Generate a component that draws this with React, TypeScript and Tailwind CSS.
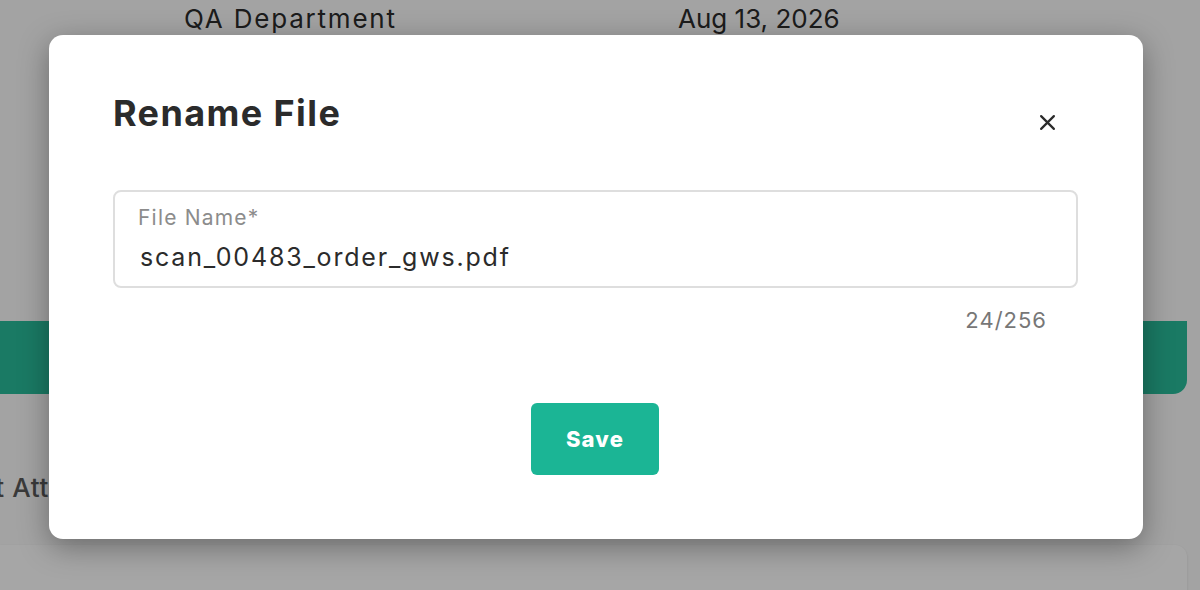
import React from "react";

export default function App() {
  return (
    <div
      className="relative w-[1200px] h-[590px] overflow-hidden bg-[#fbfbfb]"
      style={{ fontFamily: "Inter, 'Noto Sans', sans-serif" }}
    >
      {/* background page */}
      <div className="flex flex-col w-[1187px]">
        <div className="flex h-[37px] items-center text-[26px] text-[#2b2b2b]">
          <div className="w-[184px]" />
          <div className="w-[494px] tracking-[1.8px]">QA Department</div>
          <div>Aug 13, 2026</div>
        </div>
        <div className="h-[284px]" />
        <div className="h-[73px] bg-[#28bc9a] rounded-br-[14px]" />
        <div className="h-[80px]" />
        <div className="h-[26px] flex items-center text-[26px] font-medium text-[#5a5a5a] ml-[-128px] whitespace-nowrap tracking-[0.6px]">
          Document Attachments
        </div>
        <div className="h-[45px]" />
        <div className="h-[60px] bg-white rounded-tr-[12px] shadow-sm" />
      </div>

      {/* overlay */}
      <div className="absolute inset-0 bg-black/35 pt-[35px] pl-[49px]">
        <div className="w-[1094px] h-[504px] bg-white rounded-[14px] shadow-[0_8px_30px_rgba(0,0,0,0.35)] flex flex-col pl-[64px] pr-[65px] pt-[51px]">
          <div className="flex items-start justify-between">
            <h2 className="text-[36px] leading-[54px] font-bold text-[#2b2b2b] tracking-[1.4px]">
              Rename File
            </h2>
            <button className="mt-[26px] mr-[21px] w-[20px] h-[20px] flex items-center justify-center text-[#2b2b2b]">
              <svg width="17" height="17" viewBox="0 0 16 16" fill="none">
                <path d="M2 2L14 14M14 2L2 14" stroke="currentColor" strokeWidth="2.1" strokeLinecap="round" />
              </svg>
            </button>
          </div>
          <div className="mt-[50px] h-[98px] border-2 border-[#dedede] rounded-[8px] px-[23px] pt-[12px]">
            <div className="text-[21px] leading-[28px] text-[#8c8c8c] tracking-[1.2px]">File Name*</div>
            <div className="mt-[9px] ml-[2px] text-[25px] leading-[32px] text-[#2b2b2b] tracking-[1.8px]">
              scan_00483_order_gws.pdf
            </div>
          </div>
          <div className="flex justify-end pr-[31px] mt-[20px] text-[22px] leading-[24px] text-[#777] tracking-[1px]">
            24/256
          </div>
          <div className="flex justify-center mt-[71px] pr-[1px]">
            <button className="w-[128px] h-[72px] rounded-[6px] bg-[#1bb595] text-white text-[22px] font-extrabold tracking-[1.2px]">
              Save
            </button>
          </div>
        </div>
      </div>
    </div>
  );
}
